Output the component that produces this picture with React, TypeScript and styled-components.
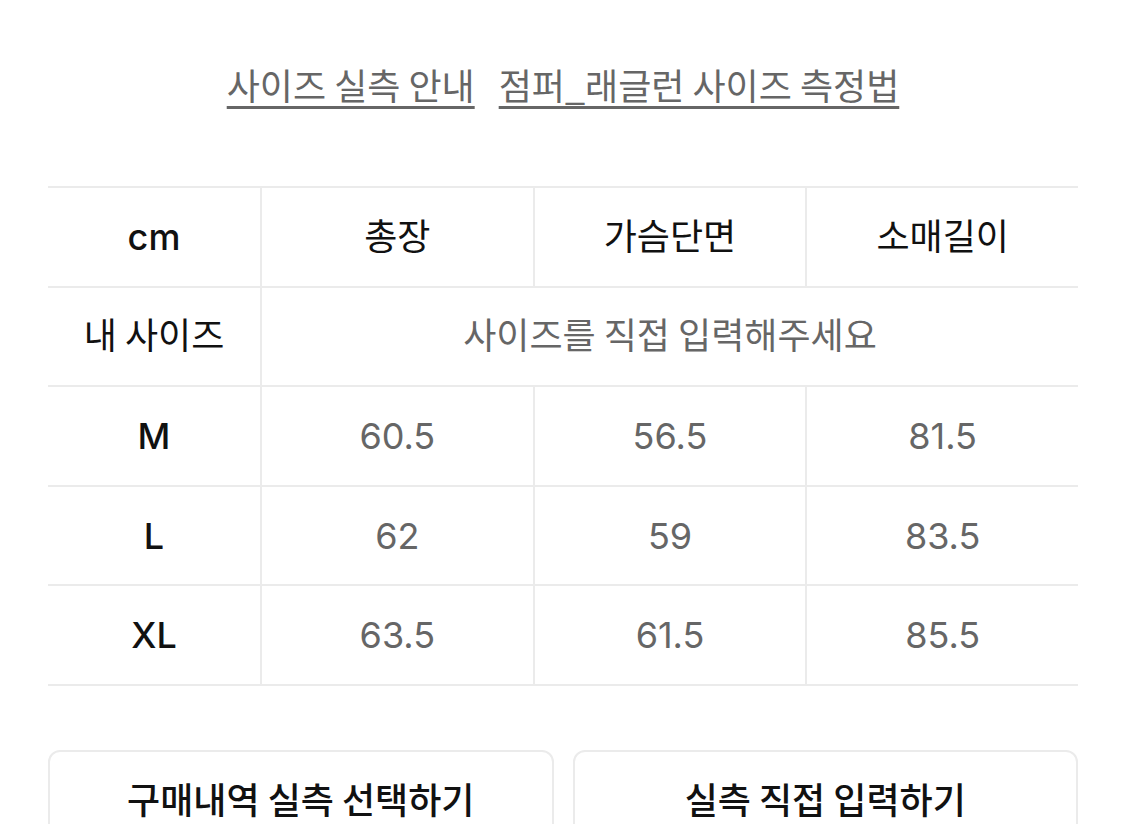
import React from "react";
import styled, { createGlobalStyle } from "styled-components";

const Global = createGlobalStyle`
  html, body { margin: 0; padding: 0; background: #fff; }
  body { font-family: "Inter", "Noto Sans CJK KR", sans-serif; overflow: hidden; }
  * { box-sizing: border-box; }
`;

const Page = styled.div`
  width: 1125px;
  padding: 0 47px 0 48px;
  display: flex;
  flex-direction: column;
`;

const LinkRow = styled.div`
  display: flex;
  justify-content: center;
  gap: 24px;
  padding-top: 58px;
  height: 186px;
`;

const GuideLink = styled.a`
  font-family: "Noto Sans CJK KR", sans-serif;
  font-size: 36px;
  line-height: 52px;
  height: 52px;
  color: #666;
  text-decoration: underline;
  text-decoration-thickness: 3px;
  text-underline-offset: 6px;
  cursor: pointer;
`;

const Table = styled.div`
  display: grid;
  grid-template-columns: 212px repeat(3, 1fr);
  border-top: 2px solid #ebebeb;
`;

const Cell = styled.div<{ $span?: number; $first?: boolean; $muted?: boolean; $head?: boolean }>`
  height: 99.6px;
  display: flex;
  align-items: center;
  justify-content: center;
  border-bottom: 2px solid #ebebeb;
  border-left: ${(p) => (p.$first ? "none" : "2px solid #ebebeb")};
  grid-column: ${(p) => (p.$span ? `span ${p.$span}` : "auto")};
  font-size: 36px;
  color: ${(p) => (p.$muted ? "#666" : "#111")};
  font-weight: ${(p) => (p.$head ? 500 : 400)};
`;

const KoText = styled.span`
  font-family: "Noto Sans CJK KR", sans-serif;
  font-size: 36px;
  font-weight: 400;
  line-height: 1;
  margin-bottom: 6px;
`;

const Buttons = styled.div`
  display: grid;
  grid-template-columns: 1fr 1fr;
  gap: 19px;
  margin-top: 64px;
`;

const ActionButton = styled.button`
  height: 100px;
  border: 2px solid #ebebeb;
  border-radius: 12px;
  background: #fff;
  font-family: "Noto Sans CJK KR", sans-serif;
  font-size: 36px;
  font-weight: 500;
  color: #111;
  display: flex;
  align-items: center;
  justify-content: center;
  padding: 0 0 4px;
`;

const rows = [
  { size: "M", vals: ["60.5", "56.5", "81.5"] },
  { size: "L", vals: ["62", "59", "83.5"] },
  { size: "XL", vals: ["63.5", "61.5", "85.5"] },
];

export default function App() {
  return (
    <>
      <Global />
      <Page>
        <LinkRow>
          <GuideLink>사이즈 실측 안내</GuideLink>
          <GuideLink>점퍼_래글런 사이즈 측정법</GuideLink>
        </LinkRow>
        <Table>
          <Cell $first $head>cm</Cell>
          <Cell $head><KoText>총장</KoText></Cell>
          <Cell $head><KoText>가슴단면</KoText></Cell>
          <Cell $head><KoText>소매길이</KoText></Cell>

          <Cell $first $head><KoText>내 사이즈</KoText></Cell>
          <Cell $span={3} $muted><KoText>사이즈를 직접 입력해주세요</KoText></Cell>

          {rows.map((r) => (
            <React.Fragment key={r.size}>
              <Cell $first $head>{r.size}</Cell>
              {r.vals.map((v, i) => (
                <Cell key={i} $muted>{v}</Cell>
              ))}
            </React.Fragment>
          ))}
        </Table>
        <Buttons>
          <ActionButton>구매내역 실측 선택하기</ActionButton>
          <ActionButton>실측 직접 입력하기</ActionButton>
        </Buttons>
      </Page>
    </>
  );
}
